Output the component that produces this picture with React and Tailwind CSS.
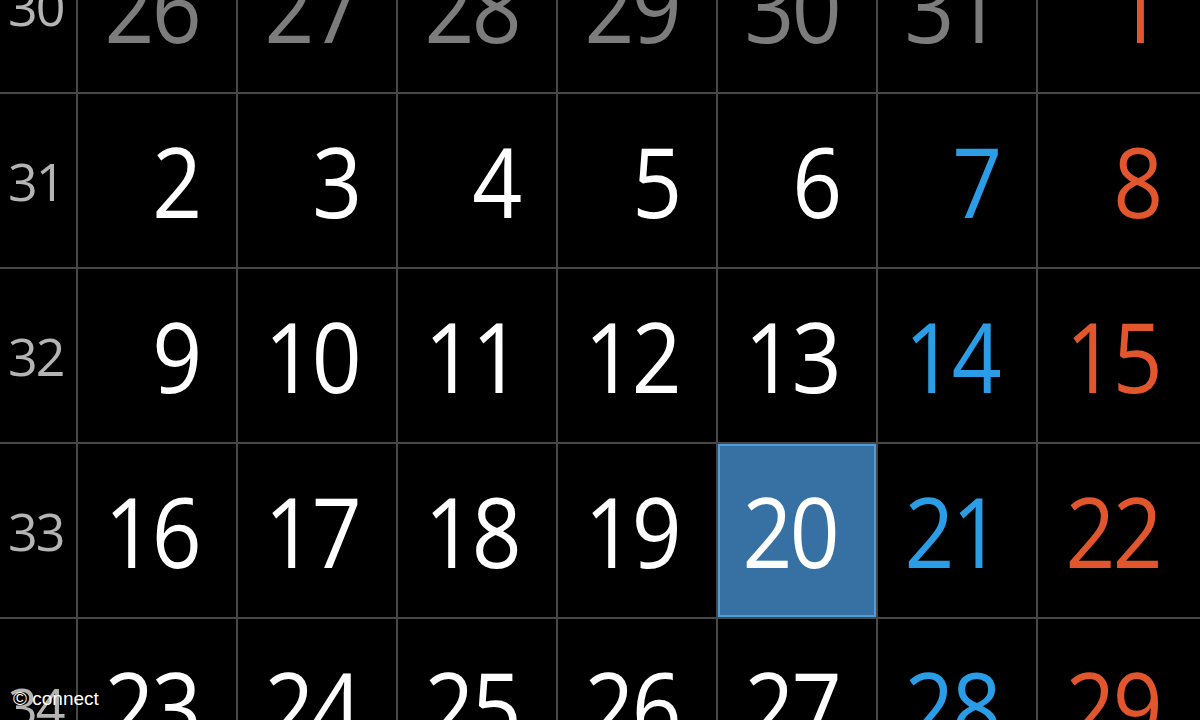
import React from 'react';

const weeks = [
  { no: 30, days: [26, 27, 28, 29, 30, 31, 1], dim: 6 },
  { no: 31, days: [2, 3, 4, 5, 6, 7, 8] },
  { no: 32, days: [9, 10, 11, 12, 13, 14, 15] },
  { no: 33, days: [16, 17, 18, 19, 20, 21, 22] },
  { no: 34, days: [23, 24, 25, 26, 27, 28, 29] },
];

function dayColor(week, i) {
  if (week.dim && i < week.dim) return 'text-[#7c7c7c]';
  if (i === 5) return 'text-[#2a9de6]';
  if (i === 6) return 'text-[#e2562d]';
  return 'text-white';
}

export default function App() {
  return (
    <div className="relative w-[1200px] h-[720px] overflow-hidden bg-black font-['Open_Sans',sans-serif]">
      <div className="grid grid-cols-[76px_repeat(6,158px)_1fr] auto-rows-[173px] gap-[2px] bg-[#474747] mt-[-81px]">
        {weeks.map(week => (
          <React.Fragment key={week.no}>
            <div className="bg-black flex items-center pl-[8px] text-[52px] leading-none font-medium text-[#b4b4b4] tracking-[-2px]">
              {week.no}
            </div>
            {week.days.map((d, i) => {
              const today = week.no === 33 && d === 20;
              return (
                <div
                  key={i}
                  className={
                    'flex items-center justify-end text-[97px] leading-none font-medium tracking-[-3px] ' +
                    (i === 6 ? 'pr-[40px] ' : 'pr-[37px] ') +
                    (today ? 'bg-[#3771a4] border-2 border-[#4c9ddc] text-white pr-[35px]' : 'bg-black ' + dayColor(week, i))
                  }
                >
                  <span className="inline-block scale-x-[0.9] origin-right">{d}</span>
                </div>
              );
            })}
          </React.Fragment>
        ))}
      </div>
      <div className="absolute left-[13px] bottom-[12px] text-[19px] leading-none text-white font-['Liberation_Sans',sans-serif]">
        © connect
      </div>
    </div>
  );
}
